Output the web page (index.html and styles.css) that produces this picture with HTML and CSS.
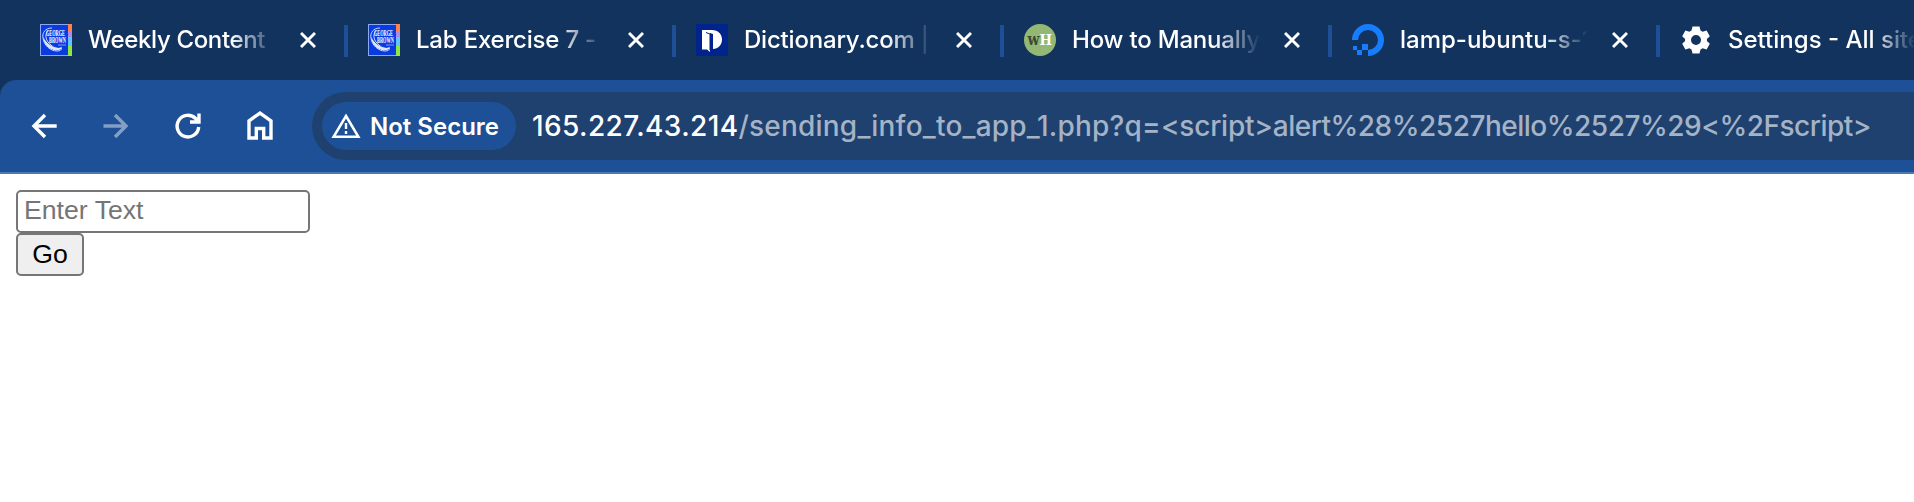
FILE: index.html
```html
<!DOCTYPE html>
<html lang="en">
<head>
<meta charset="utf-8">
<title>165.227.43.214</title>
<link rel="stylesheet" href="styles.css">
</head>
<body>
<svg class="defs" width="0" height="0">
  <symbol id="close" viewBox="0 0 16 16"><path d="M1 1L15 15M15 1L1 15" fill="none" stroke="#fff" stroke-width="2.9"/></symbol>
  <symbol id="college" viewBox="0 0 32 32">
    <rect width="32" height="32" fill="#8ba9f2"/><rect x="1" y="1" width="27" height="30" fill="#0a3be0"/>
    <path d="M28 0h4v8h-4z" fill="#ff824d"/><path d="M28 8h4v5h-4z" fill="#a98bea"/><path d="M28 13h4v9h-4z" fill="#62c5ff"/><path d="M28 22h4v10h-4z" fill="#8ee83e"/>
    <path d="M12 4C5 4 2 9 3 14c1 8 8 13 14 13 4 0 5-2 4-3-3 1-7 0-10-3C6 17 4 11 8 7" fill="none" stroke="#c8d8ff" stroke-width="1"/>
    <path d="M3 13c1 9 8 14 15 13 3 0 4-2 4-3-3 2-8 1-12-2-3-2-5-5-7-8z" fill="#dce6ff"/>
    <text x="6" y="12" class="crest" textLength="19" lengthAdjust="spacingAndGlyphs">GEORGE</text>
    <text x="9" y="19" class="crest" textLength="17" lengthAdjust="spacingAndGlyphs">BROWN</text>
    <path d="M18 21h8" stroke="#7f9ff5" stroke-width="1"/>
  </symbol>
</svg>
<header class="tabs">
  <div class="tab">
    <svg class="favicon"><use href="#college"/></svg>
    <span class="title"><span class="tight">Weekly Content</span></span>
    <svg class="close"><use href="#close"/></svg>
  </div>
  <div class="tab">
    <svg class="favicon"><use href="#college"/></svg>
    <span class="title"><span class="snug">Lab Exercise 7 -</span></span>
    <svg class="close"><use href="#close"/></svg>
  </div>
  <div class="tab">
    <svg class="favicon" viewBox="0 0 32 32"><rect width="32" height="32" fill="#00248b"/><path d="M6 6h10c6 0 10 4 10 9.500S22 25 17 25V10l-3-1v19l-3-2.500H6z" fill="#fff"/><path d="M10 8.500l4 1.500v16" fill="none" stroke="#00248b" stroke-width="1"/></svg>
    <span class="title"><span class="snug">Dictionary.com |</span></span>
    <svg class="close"><use href="#close"/></svg>
  </div>
  <div class="tab">
    <svg class="favicon" viewBox="0 0 32 32"><circle cx="16" cy="16" r="16" fill="#93b874"/><text x="3.500" y="20.500" class="wiki wiki-w" textLength="12" lengthAdjust="spacingAndGlyphs">w</text><text x="15.500" y="20.500" class="wiki wiki-h" textLength="12.500" lengthAdjust="spacingAndGlyphs">H</text></svg>
    <span class="title"><span class="snug">How to Manually</span></span>
    <svg class="close"><use href="#close"/></svg>
  </div>
  <div class="tab">
    <svg class="favicon" viewBox="0 0 32 32"><path d="M3 16A13 13 0 1 1 16 29" fill="none" stroke="#177dff" stroke-width="6"/><path d="M10 20h6v6h-6zM5 26h5v5H5zM1 22h4v4H1z" fill="#177dff"/></svg>
    <span class="title">lamp-ubuntu-s-1</span>
    <svg class="close"><use href="#close"/></svg>
  </div>
  <div class="tab">
    <svg class="favicon" viewBox="0 0 32 32"><path fill="#fff" fill-rule="evenodd" d="M12.500 2.500h7l1 4 2.200 1.300 3.900-1.200 3.200 5.700-2.900 2.800v1.900l2.900 2.800-3.200 5.700-3.900-1.200-2.200 1.300-1 4h-7l-1-4-2.200-1.300-3.900 1.200-3.200-5.700L5.100 17v-1.900l-2.900-2.800 3.200-5.700 3.900 1.200 2.200-1.300zM16 11a5 5 0 1 0 0 10 5 5 0 0 0 0-10z"/></svg>
    <span class="title">Settings - All site</span>
  </div>
</header>
<nav class="toolbar">
  <div class="controls">
    <svg viewBox="0 0 32 32"><path d="M28.700 16H6M17 5L6 16l11 11" class="line"/></svg>
    <svg viewBox="0 0 32 32" class="disabled"><path d="M3.500 16h22.500M15 5l11 11-11 11" class="line"/></svg>
    <svg viewBox="0 0 32 32"><path d="M26.700 17A10.800 10.800 0 1 1 23.600 8.500L26 11M27 3.500v8.500h-9" class="line"/></svg>
    <svg viewBox="0 0 32 32"><path d="M5 28V10.800L16 3l11 7.800V28h-7.300v-9.500h-7.400V28z" class="line"/></svg>
  </div>
  <div class="omnibox">
    <div class="security">
      <svg viewBox="0 0 30 26"><path d="M15 3L27.300 23.700H2.700z" fill="none" stroke="#fff" stroke-width="2.600"/><path d="M15 10v6M15 18v3" stroke="#fff" stroke-width="2.400"/></svg>
      <span>Not Secure</span>
    </div>
    <div class="url"><span class="host">165.227.43.214</span><span class="path">/sending_info_to_app_1.php?q=</span><span class="path query-tag">&lt;script&gt;</span><span class="path query-value">alert%28%2527hello%2527%29&lt;%2Fscript&gt;</span></div>
  </div>
</nav>
<main>
  <form class="query">
    <input type="text" placeholder="Enter Text">
    <button type="button">Go</button>
  </form>
</main>
</body>
</html>
```
FILE: styles.css
```css
* { box-sizing: border-box; }
body { margin: 0; height: 502px; overflow: hidden; background: #fff; font-family: Inter, "Liberation Sans", sans-serif; color: #fff; }
.defs { display: block; width: 0; height: 0; }
.tabs { display: flex; height: 98px; padding-left: 20px; background: #13335f; overflow: hidden; }
.tab { display: flex; flex: none; align-items: center; width: 328px; height: 80px; padding-left: 20px; background: linear-gradient(#1d5096, #1d5096) right 0 top 25px / 4px 32px no-repeat; }
.favicon { flex: none; width: 32px; height: 32px; }
.title { flex: none; width: 188px; margin-left: 16px; font-size: 24px; font-weight: 500; line-height: 32px; white-space: nowrap; overflow: hidden; -webkit-mask-image: linear-gradient(90deg, #000 76%, transparent); mask-image: linear-gradient(90deg, #000 76%, transparent); }
.tight { letter-spacing: -.35px; }
.snug { letter-spacing: -.2px; }
.close { flex: none; width: 16px; height: 16px; margin-left: 24px; }
.crest { font: bold 8px "Liberation Serif", serif; fill: #fff; }
.wiki { font: bold 17px "DejaVu Serif", serif; }
.wiki-w { fill: #3b4a32; }
.wiki-h { fill: #fff; font-size: 15px; }
.toolbar { display: flex; align-items: center; height: 94px; margin-top: -18px; border-bottom: 2px solid #4a79b4; border-radius: 16px 0 0 0; background: #1d5096; overflow: hidden; }
.controls { display: flex; flex: none; gap: 40px; width: 312px; padding-left: 28px; }
.controls svg { flex: none; width: 32px; height: 32px; }
.line { fill: none; stroke: #fff; stroke-width: 3.4; }
.disabled { opacity: .45; }
.omnibox { display: flex; align-items: center; flex: 1; height: 68px; padding-left: 10px; border-radius: 34px 0 0 34px; background: #1f416f; }
.security { display: flex; flex: none; align-items: center; width: 194px; height: 48px; padding-left: 9px; border-radius: 24px; background: #1d5096; font-size: 24px; font-weight: 600; white-space: nowrap; }
.security svg { flex: none; width: 30px; height: 26px; margin-right: 9px; }
.url { margin-left: 16px; font-size: 28px; font-weight: 500; white-space: nowrap; }
.host { letter-spacing: .4px; }
.path { color: #a5b3c6; letter-spacing: .2px; }
.query-tag { letter-spacing: -.23px; }
.query-value { letter-spacing: -.49px; }
main { padding: 16px; }
.query { display: flex; flex-direction: column; align-items: flex-start; }
.query input, .query button { height: 43px; border: 2px solid #767676; border-radius: 5px; font: 26.67px "Liberation Sans", Arial, sans-serif; }
.query input { width: 294px; padding: 0 6px 2px; background: #fff; }
.query input::placeholder { color: #757575; opacity: 1; }
.query button { width: 68px; padding: 0 0 1px; background: #efefef; color: #000; }
```
